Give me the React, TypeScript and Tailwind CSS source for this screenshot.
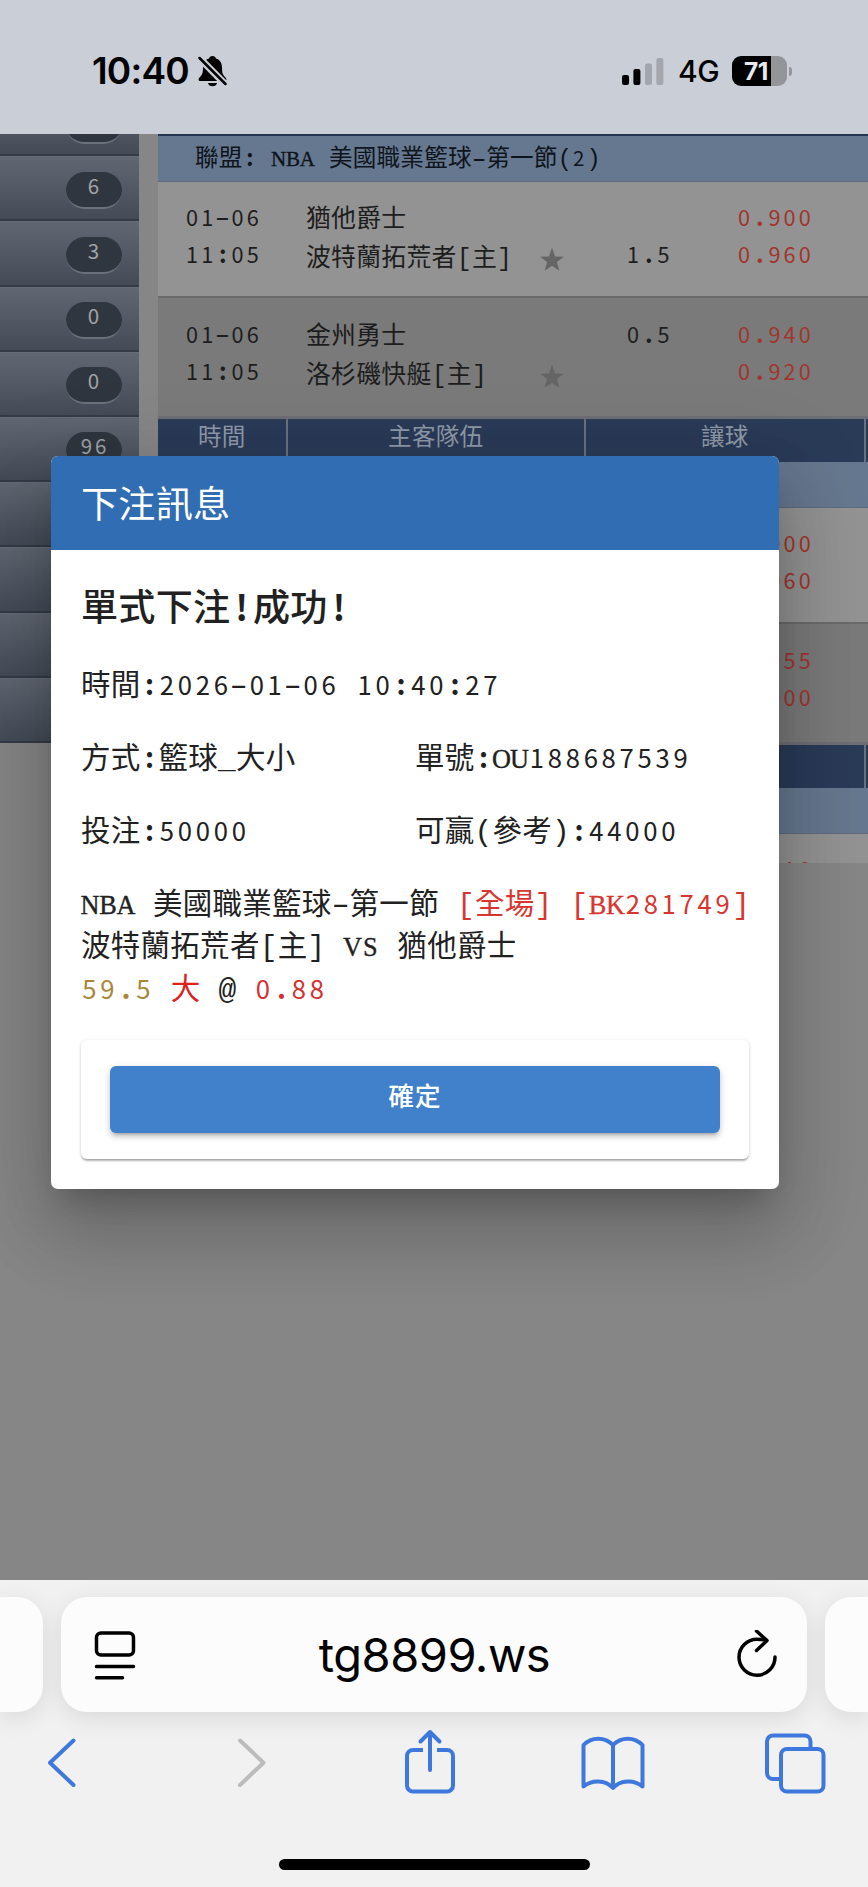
import React from "react";

const TOKENS = /[A-Z]|[0-9]+|[:.!]|-|[ _@()[\]]+|[^A-Z0-9:.!\-_@()[\] ]+/g;

function Mono({ children }: { children: string }) {
  const parts = children.match(TOKENS) ?? [];
  return (
    <>
      {parts.map((p, i) => {
        if (/^[A-Z]/.test(p))
          return (
            <span
              key={i}
              className="inline-flex w-[0.685em] justify-center font-['Liberation_Serif',serif] text-[0.89em] leading-none tracking-normal [-webkit-text-stroke:0.35px_currentColor]"
            >
              {p}
            </span>
          );
        if (/^[0-9]/.test(p))
          return (
            <span
              key={i}
              className="-mr-[0.05em] ml-[0.05em] text-[0.87em] leading-none tracking-[0.145em]"
            >
              {p}
            </span>
          );
        if (/^[:.!]/.test(p))
          return (
            <span
              key={i}
              className="inline-block w-[0.648em] text-center text-[0.94em] leading-none font-bold tracking-normal"
            >
              {p}
            </span>
          );
        if (p === "-")
          return (
            <span
              key={i}
              className="inline-block scale-x-[1.6] font-['Liberation_Mono',monospace] leading-none"
            >
              -
            </span>
          );
        if (/^[ _@()[\]]/.test(p))
          return (
            <span key={i} className="font-['Liberation_Mono',monospace] leading-none">
              {p}
            </span>
          );
        return <span key={i}>{p}</span>;
      })}
    </>
  );
}

const MONO = "whitespace-pre tracking-[0.0094em] font-['Noto_Sans_CJK_TC',sans-serif]";

function StatusBar() {
  return (
    <header className="flex h-[134px] shrink-0 items-start justify-between bg-[#c9ced7] pr-[76px] pl-[92px] font-['Inter',sans-serif] text-black">
      <div className="flex items-center pt-[48px]">
        <span className="w-[106px] text-[37px] leading-[45px] font-semibold tracking-[-0.8px]">
          10:40
        </span>
        <svg width="30" height="32" viewBox="0 0 30 32">
          <path
            d="M14.5 1c-1.900 0-3.200 1.200-3.400 2.500C7 4.800 5 8.200 5 12.500c0 6-1 7.500-3.300 9.700C-.3 24.300.6 26 2.600 26h23.800c2 0 2.900-1.700.9-3.800C25 20 24 18.500 24 12.500c0-4.300-2-7.700-6.100-9C17.700 2.200 16.400 1 14.500 1ZM10 28h9c-.5 2.200-2.300 3.300-4.500 3.300S10.500 30.200 10 28Z"
            fill="#000"
          />
          <path d="M0 1.500 28 30" stroke="#c9ced7" strokeWidth="7" />
          <path d="M1.500 3 27.500 29" stroke="#000" strokeWidth="2.500" strokeLinecap="round" />
        </svg>
      </div>
      <div className="flex items-center pt-[50px]">
        <svg width="42" height="28" viewBox="0 0 42 28">
          <rect x="0" y="18" width="7" height="10" rx="2" />
          <rect x="11.400" y="12" width="7" height="16" rx="2" />
          <rect x="23" y="6.500" width="7" height="21.500" rx="2" fill="#a3a6ad" />
          <rect x="34.400" y="1" width="7" height="27" rx="2" fill="#a3a6ad" />
        </svg>
        <span className="ml-[14px] w-[54px] text-[30px] leading-[42px] font-medium tracking-[-0.5px]">
          4G
        </span>
        <div className="flex h-[30px] w-[55px] items-center overflow-hidden rounded-[9px] bg-[linear-gradient(90deg,#000_70%,#939599_70%)]">
          <span className="ml-[12px] text-[24.500px] leading-[30px] font-bold tracking-[-0.5px] text-[#e6e9ee]">
            71
          </span>
        </div>
        <span className="ml-[2px] h-[9px] w-[3px] rounded-r-full bg-[#939599]" />
      </div>
    </header>
  );
}

const COUNTS = ["0", "6", "3", "0", "0", "96", "", "", "", ""];

function Sidebar() {
  return (
    <nav className="-mt-[43px] w-[139px] shrink-0">
      {COUNTS.map((n, i) => (
        <div
          key={i}
          className="flex h-[65.200px] justify-end border-t border-b-2 border-t-[#666d78] border-b-[#343b47] bg-linear-to-b from-[#616772] to-[#444b57] pt-[14.500px] pr-[17px]"
        >
          {n && (
            <span
              className={`${MONO} flex h-[37px] w-[56px] justify-center rounded-full border-b-2 border-[#6b717a] bg-[#30363f] text-[23.600px] leading-[25px] text-[#a0a3a8]`}
            >
              <span>
                <Mono>{n}</Mono>
              </span>
            </span>
          )}
        </div>
      ))}
    </nav>
  );
}

function HeadRow() {
  return (
    <div
      className={`${MONO} flex h-[46px] shrink-0 border-t-3 border-[#6d6f75] bg-[#2a3b58] text-center text-[23.600px] leading-[33px] text-[#8f99a8]`}
    >
      <span className="w-[129.500px] border-r-2 border-[#69717f]">時間</span>
      <span className="w-[298.500px] border-r-2 border-[#69717f]">主客隊伍</span>
      <span className="w-[279.500px] border-r-2 border-[#69717f]">讓球</span>
    </div>
  );
}

function LeagueRow({ name }: { name: string }) {
  return (
    <div
      className={`${MONO} h-[46px] shrink-0 border-b border-[#5f6b80] bg-[#66788f] pl-[37px] text-[23.600px] leading-[40px] text-[#0e141c]`}
    >
      <Mono>{name}</Mono>
    </div>
  );
}

type Match = {
  date: string;
  time: string;
  teams: [string, string];
  line: [string, string];
  odds: [string, string];
  alt?: boolean;
};

function MatchRow({ m }: { m: Match }) {
  return (
    <div
      className={`${MONO} flex shrink-0 text-[24.900px] text-[#1d1d1d] ${
        m.alt ? "h-[118px] bg-[#7a7a7a] pt-px" : "h-[116px] border-b-2 border-[#6b6b6b] bg-[#939393]"
      }`}
    >
      <div className="flex w-[146px] flex-col pt-[15px] pl-[27px] leading-[37px]">
        <span className="h-[37px]">
          <Mono>{m.date}</Mono>
        </span>
        <span className="h-[37px]">
          <Mono>{m.time}</Mono>
        </span>
      </div>
      <div className="flex w-[235px] flex-col pt-[15px] pl-[2px] leading-[39px]">
        <span className="h-[39px]">
          <Mono>{m.teams[0]}</Mono>
        </span>
        <span className="h-[39px]">
          <Mono>{m.teams[1]}</Mono>
        </span>
      </div>
      <svg width="26" height="26" viewBox="0 0 24 24" className="mt-[65px] shrink-0">
        <path
          d="m12 .8 2.800 7.900 8.200.2-6.500 5 2.300 8-6.800-4.600-6.800 4.600 2.300-8-6.500-5 8.200-.2z"
          fill="#656565"
        />
      </svg>
      <div className="flex w-[172px] flex-col pt-[15px] pl-[61px] leading-[37px]">
        <span className="h-[37px]">
          <Mono>{m.line[0]}</Mono>
        </span>
        <span className="h-[37px]">
          <Mono>{m.line[1]}</Mono>
        </span>
      </div>
      <div className="flex flex-col pt-[15px] leading-[37px] text-[#a0362e]">
        <span className="h-[37px]">
          <Mono>{m.odds[0]}</Mono>
        </span>
        <span className="h-[37px]">
          <Mono>{m.odds[1]}</Mono>
        </span>
      </div>
    </div>
  );
}

const JAZZ: Match = {
  date: "01-06",
  time: "11:05",
  teams: ["猶他爵士", "波特蘭拓荒者[主]"],
  line: ["", "1.5"],
  odds: ["0.900", "0.960"],
};
const WARRIORS: Match = {
  date: "01-06",
  time: "11:05",
  teams: ["金州勇士", "洛杉磯快艇[主]"],
  line: ["0.5", ""],
  odds: ["0.940", "0.920"],
  alt: true,
};

function Board() {
  return (
    <section className="ml-[19px] flex h-[729px] w-[710px] shrink-0 flex-col overflow-hidden">
      <div className="h-[2px] shrink-0 bg-[#24354f]" />
      <LeagueRow name="聯盟: NBA 美國職業籃球-第一節(2)" />
      <MatchRow m={JAZZ} />
      <MatchRow m={WARRIORS} />
      <HeadRow />
      <LeagueRow name="" />
      <MatchRow m={JAZZ} />
      <MatchRow m={{ ...WARRIORS, odds: ["0.955", "0.900"] }} />
      <HeadRow />
      <LeagueRow name="" />
      <MatchRow m={{ ...JAZZ, odds: ["0.910", "0.950"] }} />
    </section>
  );
}

function BetDialog() {
  return (
    <div
      role="dialog"
      className={`${MONO} absolute top-[322px] left-[50.500px] flex h-[733px] w-[728px] flex-col overflow-hidden rounded-[7px] bg-white text-[29.500px] text-[#212121] shadow-[0_20px_28px_-13px_rgba(0,0,0,0.2),0_44px_70px_6px_rgba(0,0,0,0.14),0_17px_85px_15px_rgba(0,0,0,0.12)]`}
    >
      <h2 className="h-[94px] shrink-0 bg-[#316db2] pl-[30.500px] text-[37.100px] leading-[92px] text-white">
        下注訊息
      </h2>
      <div className="flex grow flex-col px-[30.500px]">
        <h3 className="mt-[29px] h-[52px] text-[37.100px] leading-[52px] font-medium">
          <Mono>單式下注!成功!</Mono>
        </h3>
        <p className="mt-[29px] h-[44px] leading-[44px]">
          <Mono>時間:2026-01-06 10:40:27</Mono>
        </p>
        <div className="mt-[28.500px] flex h-[44px] leading-[44px]">
          <p className="w-[334px]">
            <Mono>方式:籃球_大小</Mono>
          </p>
          <p>
            <Mono>單號:OU188687539</Mono>
          </p>
        </div>
        <div className="mt-[29px] flex h-[44px] leading-[44px]">
          <p className="w-[334px]">
            <Mono>投注:50000</Mono>
          </p>
          <p>
            <Mono>可贏(參考):44000</Mono>
          </p>
        </div>
        <div className="mt-[30px] flex h-[129px] flex-col leading-[43px]">
          <p className="h-[42.500px]">
            <Mono>NBA 美國職業籃球-第一節 </Mono>
            <span className="text-[#d8352f]">
              <Mono>[全場] [BK281749]</Mono>
            </span>
          </p>
          <p className="h-[43px]">
            <Mono>波特蘭拓荒者[主] VS 猶他爵士</Mono>
          </p>
          <p className="h-[43px]">
            <span className="text-[#a9873a]">
              <Mono>59.5</Mono>
            </span>
            <span className="text-[#e0201c]">
              <Mono> 大</Mono>
            </span>
            <Mono> @ </Mono>
            <span className="text-[#d3302f]">
              <Mono>0.88</Mono>
            </span>
          </p>
        </div>
        <div className="mt-[31.500px] h-[119px] w-[667.500px] rounded-[6px] bg-white px-[29px] pt-[26px] shadow-[0_3px_2px_-1px_rgba(0,0,0,0.2),0_1px_2px_0_rgba(0,0,0,0.14),0_1px_4px_0_rgba(0,0,0,0.12)]">
          <button className="block h-[67px] w-full rounded-[6px] bg-[#4181cb] pb-[10px] text-center text-[25.800px] leading-[57px] font-medium tracking-[0.029em] text-white shadow-[0_5px_3px_-4px_rgba(0,0,0,0.2),0_4px_5px_0_rgba(0,0,0,0.14),0_2px_10px_0_rgba(0,0,0,0.12)]">
            確定
          </button>
        </div>
      </div>
    </div>
  );
}

const BLUE = "#3f78dc";

function BrowserBar() {
  const pill = "h-[115px] bg-[#fcfcfc] shadow-[0_6px_24px_rgba(0,0,0,0.1)]";
  return (
    <footer className="flex h-[307px] shrink-0 flex-col overflow-hidden bg-[#f1f1f1]">
      <div className="mt-[17px] flex justify-between">
        <div className={`${pill} w-[43px] rounded-r-[26px]`} />
        <div className={`${pill} flex w-[746px] items-center justify-between rounded-[26px] pr-[29px] pl-[33px]`}>
          <svg width="42" height="50" viewBox="0 0 42 50" fill="none" stroke="#000" strokeWidth="3.500" strokeLinecap="round">
            <rect x="2.500" y="3" width="37" height="22" rx="4.500" />
            <path d="M2.500 36.500h37M2.500 47.800h26" />
          </svg>
          <span className="mr-[3px] font-['Inter',sans-serif] text-[47px] leading-[60px] tracking-[-0.5px] text-black">
            tg8899.ws
          </span>
          <svg width="42" height="50" viewBox="0 0 42 50" fill="none" stroke="#000" strokeWidth="3.500" strokeLinecap="round" strokeLinejoin="round">
            <path d="M39 27a18 18 0 1 1-18-17.800q5 0 9 1.100" />
            <path d="M20.500 1 31 10.600 20.500 20.500" />
          </svg>
        </div>
        <div className={`${pill} w-[43px] rounded-l-[26px]`} />
      </div>
      <div className="flex h-[100px] items-start pt-[16px] pl-[46px]">
        <svg width="30" height="70" viewBox="0 0 30 70" fill="none" stroke={BLUE} strokeWidth="4" strokeLinecap="round" strokeLinejoin="round">
          <path d="M27.500 12.500 4 34.700 27.500 57" />
        </svg>
        <svg className="ml-[161px]" width="30" height="70" viewBox="0 0 30 70" fill="none" stroke="#bcbcbc" strokeWidth="4" strokeLinecap="round" strokeLinejoin="round">
          <path d="M3 12.500 26.500 34.700 3 57" />
        </svg>
        <svg className="ml-[137px]" width="52" height="70" viewBox="0 0 52 70" fill="none" stroke={BLUE} strokeWidth="4" strokeLinecap="round" strokeLinejoin="round">
          <path d="M26 42V4M16.500 13.500 26 4l9.500 9.500" />
          <path d="M19 22H9a6 6 0 0 0-6 6v29.500a6 6 0 0 0 6 6h34a6 6 0 0 0 6-6V28a6 6 0 0 0-6-6H33" strokeLinecap="butt" />
        </svg>
        <svg className="ml-[125px]" width="64" height="70" viewBox="0 0 64 70" fill="none" stroke={BLUE} strokeWidth="4" strokeLinejoin="round">
          <path d="M32 17v42M32 17C24 8.500 10.500 8.500 2.500 17v41.500c8-7 22-7 29.500 1.500 7.500-8.500 21.500-8.500 29.500-1.500V17C53.500 8.500 40 8.500 32 17Z" />
        </svg>
        <svg className="ml-[119px]" width="62" height="70" viewBox="0 0 62 70" fill="none" stroke={BLUE} strokeWidth="4">
          <path d="M46.500 20v-6.500a6 6 0 0 0-6-6H9a6 6 0 0 0-6 6V45a6 6 0 0 0 6 6h8" />
          <rect x="17" y="21" width="42.500" height="42.500" rx="6" />
        </svg>
      </div>
      <div className="mt-[47px] ml-[279px] h-[11px] w-[311px] rounded-full bg-black" />
    </footer>
  );
}

export default function App() {
  return (
    <div className="flex h-[1887px] w-[868px] flex-col overflow-hidden bg-[#868686]">
      <StatusBar />
      <main className="relative flex h-[1446px] shrink-0 items-start overflow-hidden">
        <Sidebar />
        <Board />
        <BetDialog />
      </main>
      <BrowserBar />
    </div>
  );
}
